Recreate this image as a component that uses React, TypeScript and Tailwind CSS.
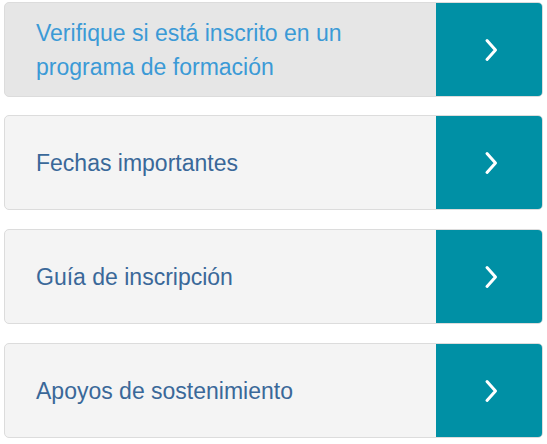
import React from "react";

const items = [
  { label: "Verifique si está inscrito en un programa de formación", active: true },
  { label: "Fechas importantes", active: false },
  { label: "Guía de inscripción", active: false },
  { label: "Apoyos de sostenimiento", active: false },
];

function Chevron() {
  return (
    <svg width="16" height="24" viewBox="0 0 16 24" fill="none">
      <path d="M4 2.5 L12.5 12 L4 21.5" stroke="white" strokeWidth="3" strokeLinecap="round" strokeLinejoin="round" />
    </svg>
  );
}

export default function App() {
  return (
    <div className="min-h-screen bg-white pt-[2px] pl-[4px] pr-[4px] font-['Liberation_Sans',Arial,sans-serif]">
      <div className="flex flex-col gap-[18px]">
        {items.map((item, i) => (
          <a
            key={item.label}
            href="#"
            className={`flex h-[95px] overflow-hidden rounded-[5px] border border-[#dcdcdc] ${
              item.active ? "bg-[#e6e6e6]" : "bg-[#f4f4f4]"
            } ${i >= 2 ? "mt-px" : ""}`}
          >
            <div className="flex flex-1 items-center pl-[31px] pr-4">
              <span
                className={`text-[23px] leading-[34px] ${
                  item.active ? "text-[#3b9ad6]" : "text-[#3a6899]"
                }`}
              >
                {item.active ? (
                  <>
                    Verifique si está inscrito en un
                    <br />
                    programa de formación
                  </>
                ) : (
                  item.label
                )}
              </span>
            </div>
            <div className="-my-px -mr-px flex w-[107px] items-center justify-center bg-[#0090a5] pl-[2px]">
              <Chevron />
            </div>
          </a>
        ))}
      </div>
    </div>
  );
}
